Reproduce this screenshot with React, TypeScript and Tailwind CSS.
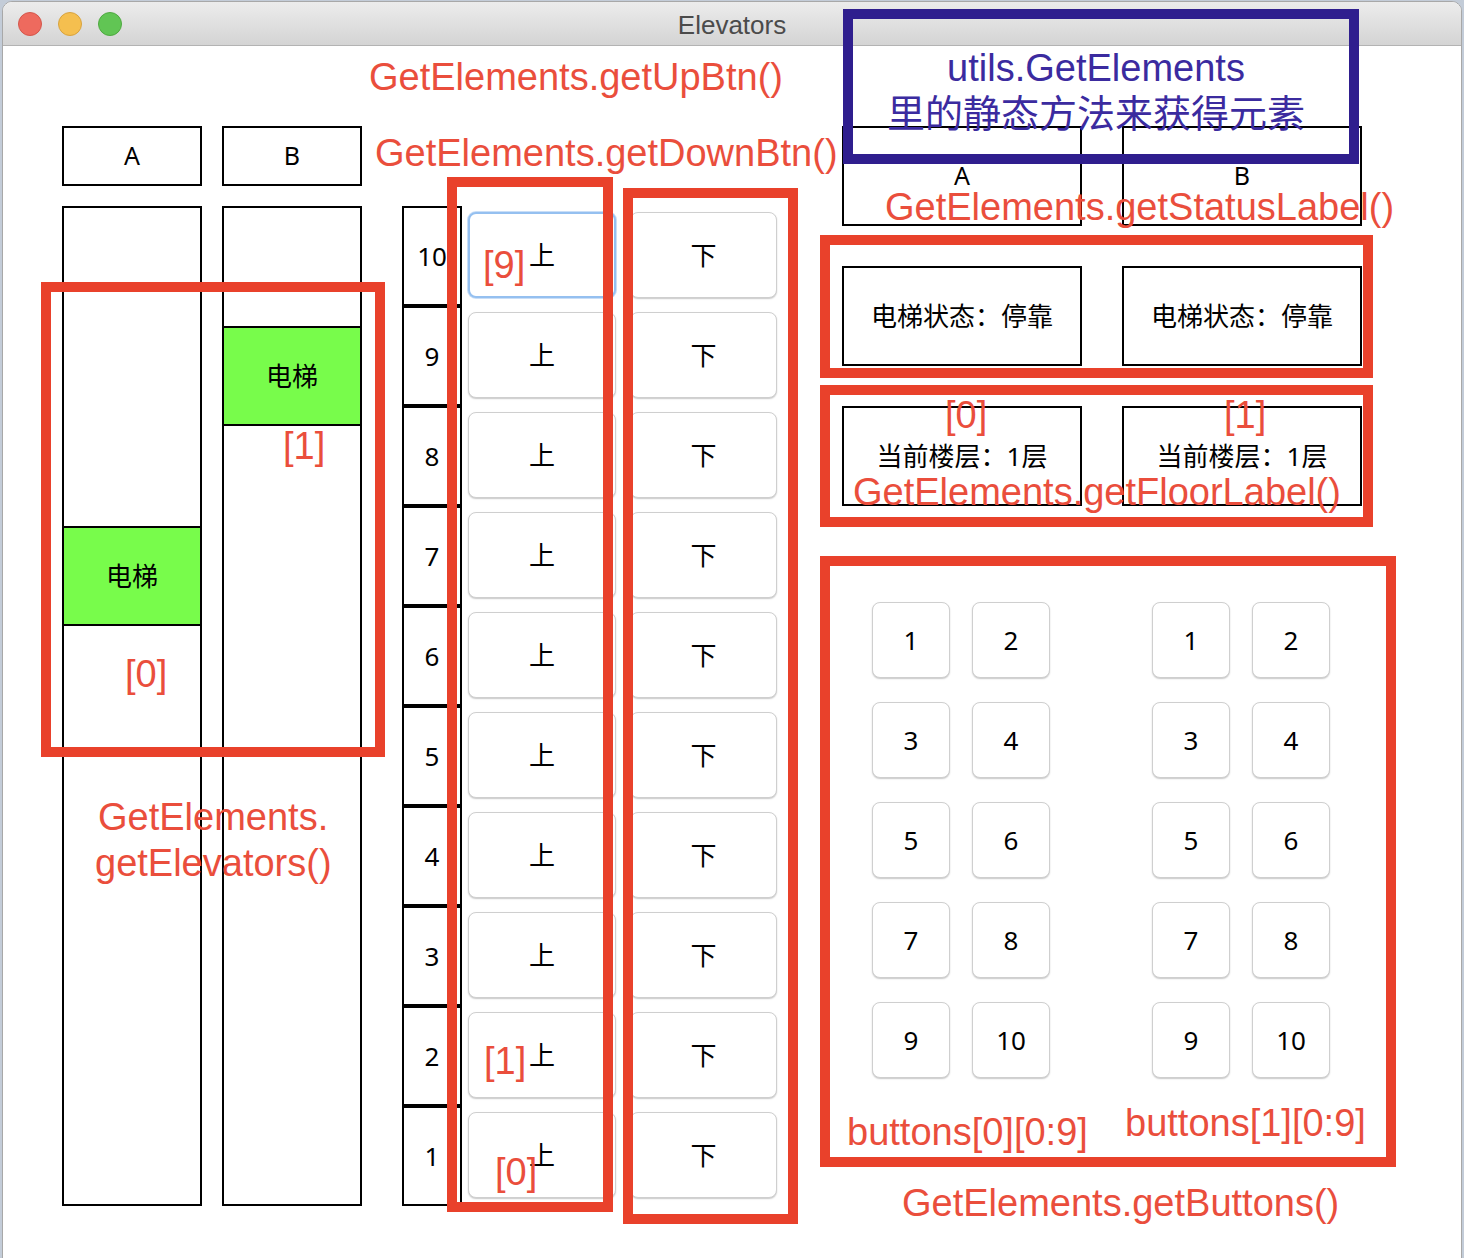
import React from "react";

const UI = "font-['Noto_Sans','Noto_Sans_CJK_SC',sans-serif]";
const ANN = "font-['Liberation_Sans','Noto_Sans_CJK_SC',sans-serif]";

const floors = [10, 9, 8, 7, 6, 5, 4, 3, 2, 1];
const panelNums = [1, 2, 3, 4, 5, 6, 7, 8, 9, 10];

const btn =
  "bg-white border border-[#cfcfcf] rounded-[8px] shadow-[0_1px_1.5px_rgba(0,0,0,0.22)] flex items-center justify-center text-[26px] text-black";

function Shaft({ name, offset }: { name: string; offset: "a" | "b" }) {
  return (
    <div className="flex flex-col w-[140px]">
      <div className="h-[60px] border-2 border-black flex items-center justify-center text-[25px]">{name}</div>
      <div className="mt-[20px] h-[1000px] border-2 border-black flex flex-col">
        <div className={offset === "a" ? "h-[318px] shrink-0" : "h-[118px] shrink-0"} />
        <div className="h-[100px] shrink-0 border-y-2 border-black bg-[#78fc4b] flex items-center justify-center text-[26px]">
          电梯
        </div>
      </div>
    </div>
  );
}

function Panel({ name }: { name: string }) {
  return (
    <div className="flex flex-col w-[240px]">
      <div className="h-[100px] border-2 border-black flex items-center justify-center text-[25px]">{name}</div>
      <div className="mt-[40px] h-[100px] border-2 border-black flex items-center justify-center text-[26px]">
        电梯状态：停靠
      </div>
      <div className="mt-[40px] h-[100px] border-2 border-black flex items-center justify-center text-[26px]">
        当前楼层：1层
      </div>
      <div className="mt-[96px] pl-[30px] grid grid-cols-[78px_78px] gap-x-[22px] gap-y-[24px]">
        {panelNums.map((n) => (
          <div key={n} className={`${btn} h-[76px]`}>
            {n}
          </div>
        ))}
      </div>
    </div>
  );
}

export default function App() {
  return (
    <div className="relative w-[1464px] h-[1258px] overflow-hidden bg-[#c3ccd8] pl-[2px] pt-[1px]">
      {/* window */}
      <div className={`w-[1460px] h-[1260px] bg-white rounded-t-[10px] border border-[#a8a8a8] overflow-hidden flex flex-col ${UI}`}>
        <div className="h-[44px] shrink-0 border-b border-[#b3b3b3] bg-gradient-to-b from-[#ececec] to-[#d4d4d4] flex items-center relative">
          <div className="flex items-center gap-[16px] pl-[15px]">
            <div className="w-[24px] h-[24px] rounded-full bg-[#ee6a5e] border border-[#d4574c]" />
            <div className="w-[24px] h-[24px] rounded-full bg-[#f5bf4f] border border-[#d8a33f]" />
            <div className="w-[24px] h-[24px] rounded-full bg-[#61c554] border border-[#4fa941]" />
          </div>
          <div className="absolute inset-0 pt-[3px] flex items-center justify-center text-[26px] text-[#4b4b4b] font-['Liberation_Sans',sans-serif]">
            Elevators
          </div>
        </div>

        <div className="flex pl-[59px] pt-[80px] text-black">
          <div className="flex gap-[20px]">
            <Shaft name="A" offset="a" />
            <Shaft name="B" offset="b" />
          </div>

          <div className="ml-[40px] mt-[80px] w-[60px] flex flex-col">
            {floors.map((f) => (
              <div key={f} className="h-[100px] border-2 border-black flex items-center justify-center text-[26px]">
                {f}
              </div>
            ))}
          </div>

          <div className="ml-[6px] mt-[80px] w-[148px] flex flex-col">
            {floors.map((f, i) => (
              <div key={f} className="h-[100px] pt-[6px]">
                <div
                  className={
                    i === 0
                      ? "h-[86px] bg-white border-[2px] border-[#95c0f0] rounded-[8px] shadow-[0_0_0_1px_#c9def7] flex items-center justify-center text-[26px]"
                      : `${btn} h-[86px]`
                  }
                >
                  上
                </div>
              </div>
            ))}
          </div>

          <div className="ml-[14px] mt-[80px] w-[147px] flex flex-col">
            {floors.map((f) => (
              <div key={f} className="h-[100px] pt-[6px]">
                <div className={`${btn} h-[86px]`}>下</div>
              </div>
            ))}
          </div>

          <div className="ml-[65px] flex gap-[40px]">
            <Panel name="A" />
            <Panel name="B" />
          </div>
        </div>
      </div>

      {/* annotations: red boxes */}
      <div className="absolute left-[41px] top-[282px] w-[344px] h-[475px] border-[10px] border-[#e9412b]" />
      <div className="absolute left-[447px] top-[177px] w-[166px] h-[1035px] border-[10px] border-[#e9412b]" />
      <div className="absolute left-[623px] top-[188px] w-[175px] h-[1036px] border-[10px] border-[#e9412b]" />
      <div className="absolute left-[820px] top-[235px] w-[553px] h-[143px] border-[10px] border-[#e9412b]" />
      <div className="absolute left-[820px] top-[385px] w-[553px] h-[142px] border-[10px] border-[#e9412b]" />
      <div className="absolute left-[820px] top-[556px] w-[576px] h-[611px] border-[10px] border-[#e9412b]" />

      {/* purple box */}
      <div className="absolute left-[843px] top-[9px] w-[516px] h-[155px] border-[10px] border-[#2f1e8e]" />

      {/* annotation texts */}
      <div className={`absolute inset-0 pointer-events-none ${ANN} text-[38px] leading-none text-[#ea4e3c] whitespace-nowrap`}>
        <div className="absolute left-[369px] top-[58px]">GetElements.getUpBtn()</div>
        <div className="absolute left-[375px] top-[134px]">GetElements.getDownBtn()</div>
        <div className="absolute left-[125px] top-[655px]">[0]</div>
        <div className="absolute left-[283px] top-[427px]">[1]</div>
        <div className="absolute left-[98px] top-[798px]">GetElements.</div>
        <div className="absolute left-[95px] top-[844px]">getElevators()</div>
        <div className="absolute left-[483px] top-[246px]">[9]</div>
        <div className="absolute left-[484px] top-[1042px]">[1]</div>
        <div className="absolute left-[495px] top-[1153px]">[0]</div>
        <div className="absolute left-[885px] top-[188px]">GetElements.getStatusLabel()</div>
        <div className="absolute left-[945px] top-[396px]">[0]</div>
        <div className="absolute left-[1224px] top-[396px]">[1]</div>
        <div className="absolute left-[853px] top-[473px]">GetElements.getFloorLabel()</div>
        <div className="absolute left-[847px] top-[1113px]">buttons[0][0:9]</div>
        <div className="absolute left-[1125px] top-[1104px]">buttons[1][0:9]</div>
        <div className="absolute left-[902px] top-[1184px]">GetElements.getButtons()</div>
        <div className="absolute left-[843px] top-[49px] w-[506px] text-center text-[#3b2b9f]">utils.GetElements</div>
        <div className="absolute left-[843px] top-[95px] w-[506px] text-center text-[#3b2b9f]">里的静态方法来获得元素</div>
      </div>
    </div>
  );
}
